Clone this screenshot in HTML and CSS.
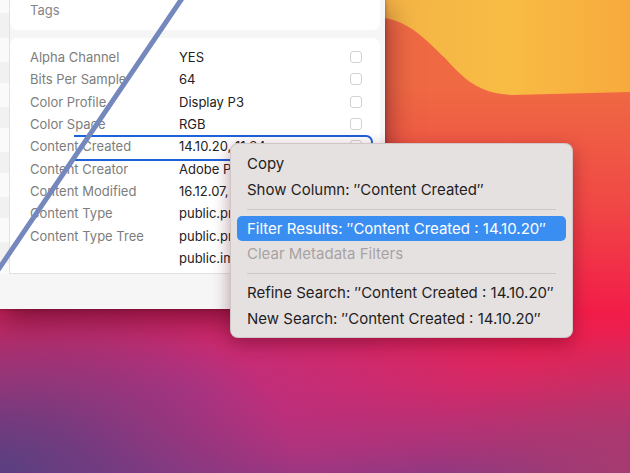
FILE: index.html
```html
<!DOCTYPE html>
<html lang="en">
<head>
    <meta charset="UTF-8">
    <title>Metadata</title>
    <link rel="stylesheet" href="styles.css">
</head>
<body>
    <div class="desktop">
        <svg class="wallpaper" width="630" height="473" viewBox="0 0 630 473">
            <defs>
                <linearGradient id="sun" x1="0" y1="0" x2="1" y2="0">
                    <stop offset="0" stop-color="#f4b446"/>
                    <stop offset="0.5" stop-color="#f8bc44"/>
                    <stop offset="1" stop-color="#f7aa3c"/>
                </linearGradient>
            </defs>
            <path d="M385,18 C410,22 426,40 445,58 C465,80 478,93 512,95 L630,92 L630,0 L385,0 Z" fill="url(#sun)"/>
        </svg>

        <div class="window">
            <div class="window-body">
                <div class="strip"></div>
                <div class="pane">
                    <div class="card tags">Tags</div>
                    <div class="card meta">
                        <div class="row"><span class="key">Alpha Channel</span><span class="val">YES</span><span class="check"></span></div>
                        <div class="row"><span class="key">Bits Per Sample</span><span class="val">64</span><span class="check"></span></div>
                        <div class="row"><span class="key">Color Profile</span><span class="val">Display P3</span><span class="check"></span></div>
                        <div class="row"><span class="key">Color Space</span><span class="val">RGB</span><span class="check"></span></div>
                        <div class="row selected"><span class="key">Content Created</span><span class="val">14.10.20, 11:34</span><span class="check"></span></div>
                        <div class="row"><span class="key">Content Creator</span><span class="val">Adobe Photoshop 22.0</span><span class="check"></span></div>
                        <div class="row"><span class="key">Content Modified</span><span class="val">16.12.07, 10:12</span><span class="check"></span></div>
                        <div class="row"><span class="key">Content Type</span><span class="val">public.png</span><span class="check"></span></div>
                        <div class="row"><span class="key">Content Type Tree</span><span class="val">public.png</span><span class="check"></span></div>
                        <div class="row"><span class="key"></span><span class="val">public.image</span></div>
                    </div>
                </div>
            </div>
            <div class="footer"></div>

            <!-- stroke drawn over the window -->
            <svg class="annotation" width="385" height="309" viewBox="0 0 385 309">
                <line x1="183" y1="-3" x2="-4" y2="273" stroke="#7588be" stroke-width="5" stroke-linecap="round"/>
            </svg>
        </div>

        <div class="menu">
            <div class="item">Copy</div>
            <div class="item">Show Column: ″Content Created″</div>
            <div class="sep"></div>
            <div class="item active">Filter Results: ″Content Created : 14.10.20″</div>
            <div class="item disabled">Clear Metadata Filters</div>
            <div class="sep"></div>
            <div class="item">Refine Search: ″Content Created : 14.10.20″</div>
            <div class="item">New Search: ″Content Created : 14.10.20″</div>
        </div>
    </div>
</body>
</html>
```

FILE: styles.css
```css
* {
    margin: 0;
    padding: 0;
    box-sizing: border-box;
    font-family: Inter, "Liberation Sans", sans-serif;
}

body {
    width: 630px;
    height: 473px;
    overflow: hidden;
}

.desktop {
    position: relative;
    width: 630px;
    height: 473px;
    background:
        radial-gradient(ellipse 300px 190px at 0% 100%, #5a3f80 0%, rgba(90, 63, 128, 0) 100%),
        radial-gradient(ellipse 360px 150px at 30% 83%, rgba(186, 48, 130, 0.95) 0%, rgba(186, 48, 130, 0) 100%),
        radial-gradient(ellipse 200px 140px at 100% 100%, rgba(170, 58, 110, 0.9) 0%, rgba(170, 58, 110, 0) 100%),
        linear-gradient(180deg, #ef6a43 18%, #f04a45 42%, #f21d49 66%, #d82862 82%, #8c3a82 100%);
}

.wallpaper {
    position: absolute;
    top: 0;
    left: 0;
}

.window {
    position: relative;
    width: 385px;
    height: 309px;
    background: #f6f6f6;
    display: flex;
    flex-direction: column;
    box-shadow: 0 0 4px rgba(60, 0, 20, 0.4), 0 10px 28px rgba(60, 0, 30, 0.6);
}

.window-body {
    display: flex;
    height: 274px;
}

.strip {
    width: 10px;
    border-right: 1px solid #e2e2e2;
    background: repeating-linear-gradient(180deg, #f1f1f1 0, #f1f1f1 21px, #fafafa 21px, #fafafa 45px);
    background-position: 0 17px;
}

.pane {
    flex: 1;
    padding-right: 5px;
    display: flex;
    flex-direction: column;
    gap: 8px;
}

.card {
    background: white;
}

.tags {
    height: 30px;
    border-radius: 0 0 7px 7px;
    padding: 2px 0 0 20px;
    color: #858585;
    font-size: 13px;
}

.meta {
    flex: 1;
    border-radius: 7px 7px 0 0;
    border-bottom: 1px solid #e1e1e1;
    padding: 8px 0 4px;
}

.row {
    position: relative;
    display: flex;
    align-items: center;
    height: 22.3px;
    font-size: 13px;
}

.key {
    width: 169px;
    padding-left: 20px;
    color: #7d7d7d;
    white-space: nowrap;
}

.val {
    width: 171px;
    color: #222;
    white-space: nowrap;
    overflow: hidden;
}

.check {
    width: 12px;
    height: 12px;
    border: 1px solid #d2d2d2;
    border-radius: 3px;
    background: white;
}

.row.selected::after {
    content: "";
    position: absolute;
    top: 0;
    left: 64px;
    right: 7px;
    height: 22px;
    border: 2px solid #1c62d8;
    border-left: none;
    border-radius: 0 7px 7px 0;
}

.footer {
    flex: 1;
    background: #f6f6f6;
}

.annotation {
    position: absolute;
    top: 0;
    left: 0;
}

.menu {
    position: absolute;
    left: 230px;
    top: 143px;
    width: 343px;
    padding: 7px 6px 5px;
    background: #e6e1e1;
    border-radius: 8px;
    border: 1px solid rgba(120, 90, 90, 0.2);
    box-shadow: 0 6px 18px rgba(80, 0, 30, 0.4);
}

.item {
    height: 25.8px;
    line-height: 25.8px;
    padding: 0 10px;
    font-size: 15px;
    color: #1e1e1e;
    border-radius: 5px;
    white-space: nowrap;
}

.item.active {
    background: #3b8ef1;
    color: white;
}

.item.disabled {
    color: #a7a3a3;
}

.sep {
    height: 1px;
    margin: 6px 10px;
    background: #cdc8c8;
}
```
